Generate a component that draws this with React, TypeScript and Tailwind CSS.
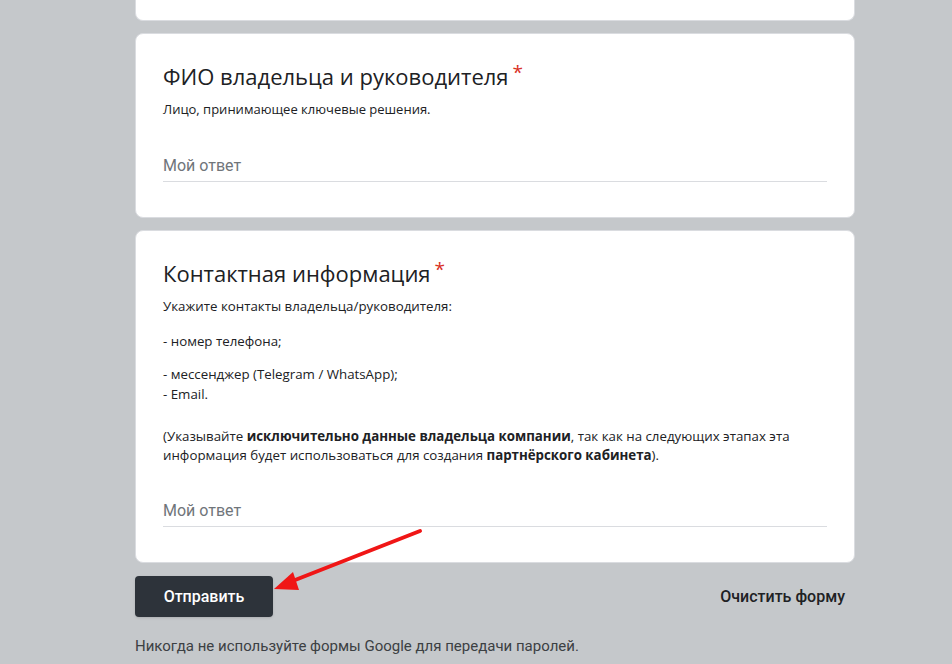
import React from "react";

function Question({ title, children }: { title: string; children?: React.ReactNode }) {
  return (
    <div className="rounded-lg border border-[#dadce0] bg-white px-[27px] pb-[35px] pt-[28px]">
      <div className="flex items-start font-['Open_Sans',sans-serif] text-[22px] leading-[28px] text-[#202124]">
        <span>{title}</span>
        <span className="ml-[4px] mt-[1px] text-[19px] leading-[19px] text-[#d93025]">*</span>
      </div>
      {children}
    </div>
  );
}

function Answer() {
  return (
    <div className="border-b border-[#dadce0] pb-[5px] font-['Roboto',sans-serif] text-[16px] leading-[20px] text-[#70757a]">
      Мой ответ
    </div>
  );
}

export default function App() {
  return (
    <div className="relative min-h-[664px] w-[952px] overflow-hidden bg-[#c5c8cb] pl-[135px]">
      <div className="flex w-[720px] flex-col gap-[12px]">
        <div className="h-[21px] rounded-b-lg border border-t-0 border-[#dadce0] bg-white" />
        <Question title="ФИО владельца и руководителя">
          <p className="mt-[9px] font-['Open_Sans',sans-serif] text-[13px] leading-[20px] text-[#202124]">
            Лицо, принимающее ключевые решения.
          </p>
          <div className="mt-[37px]">
            <Answer />
          </div>
        </Question>
        <Question title="Контактная информация">
          <div className="mt-[9px] font-['Open_Sans',sans-serif] text-[13.3px] leading-[20px] text-[#202124]">
            <p>Укажите контакты владельца/руководителя:</p>
            <p className="mt-[15px]">- номер телефона;</p>
            <p className="mt-[13px]">- мессенджер (Telegram / WhatsApp);</p>
            <p>- Email.</p>
            <p className="mt-[23px] leading-[19px]">
              (Указывайте <b>исключительно данные владельца компании</b>, так как на следующих этапах эта
              информация будет использоваться для создания <b>партнёрского кабинета</b>).
            </p>
          </div>
          <div className="mt-[36px]">
            <Answer />
          </div>
        </Question>
        <div className="mt-px flex items-center justify-between font-['Roboto',sans-serif]">
          <button className="h-[41px] w-[138px] rounded-[4px] bg-[#2d333a] text-[16px] font-medium text-white shadow-sm">
            Отправить
          </button>
          <span className="pr-[10px] text-[16px] font-medium text-[#202124]">Очистить форму</span>
        </div>
        <p className="mt-[6px] font-['Roboto',sans-serif] text-[15px] text-[#3c4043]">
          Никогда не используйте формы Google для передачи паролей.
        </p>
      </div>
      <svg className="absolute left-0 top-0" width="952" height="664" viewBox="0 0 952 664">
        <line x1="420" y1="531" x2="290" y2="582" stroke="#f01616" strokeWidth="4" strokeLinecap="round" />
        <polygon points="274,589 293,572 299,590" fill="#f01616" />
      </svg>
    </div>
  );
}
